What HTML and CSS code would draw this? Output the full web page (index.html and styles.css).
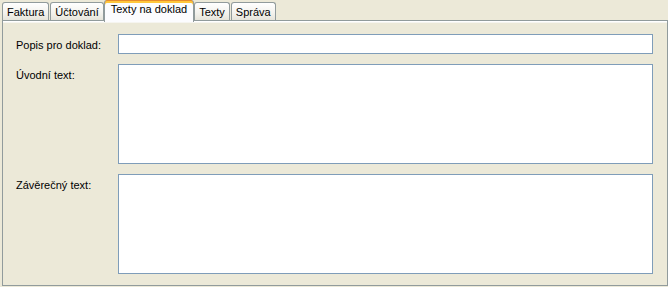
FILE: index.html
```html
<!DOCTYPE html>
<html lang="cs">

<head>
    <meta charset="UTF-8">
    <meta name="viewport" content="width=device-width, initial-scale=1.0">
    <title>Texty na doklad</title>
    <link rel="stylesheet" href="styles.css">
</head>

<body>
    <!-- Tab bar -->
    <div class="tabs">
        <div class="tab">Faktura</div>
        <div class="tab">Účtování</div>
        <div class="tab active">Texty na doklad</div>
        <div class="tab">Texty</div>
        <div class="tab">Správa</div>
    </div>

    <!-- Tab panel -->
    <div class="panel">
        <div class="form">
            <label class="label" for="popis">Popis pro doklad:</label>
            <input class="field" id="popis" type="text">

            <label class="label" for="uvod">Úvodní text:</label>
            <textarea class="field area" id="uvod"></textarea>

            <label class="label" for="zaver">Závěrečný text:</label>
            <textarea class="field area" id="zaver"></textarea>
        </div>
    </div>
</body>

</html>
```

FILE: styles.css
```css
/* Reset styling */
* {
    margin: 0;
    padding: 0;
    box-sizing: border-box;
    font-family: "Liberation Sans", Arial, sans-serif;
}

body {
    background-color: #ece9d8;
    font-size: 11px;
    color: #000;
    width: 668px;
    height: 287px;
    overflow: hidden;
}

/* Tab bar */
.tabs {
    display: flex;
    align-items: flex-end;
    height: 20px;
    padding-left: 2px;
    position: relative;
    z-index: 1;
}

.tab {
    height: 18px;
    margin-right: 1px;
    padding: 3px 4px 0 4px;
    line-height: 13px;
    border: 1px solid #919b9c;
    border-bottom: none;
    border-radius: 3px 3px 0 0;
    background: linear-gradient(#ffffff, #f3f2ed 60%, #e6e4da);
    white-space: nowrap;
}

.tab.active {
    height: 22px;
    margin: 0 0 -2px -1px;
    padding: 3px 6px 0 6px;
    border-top: none;
    background: #fcfcfe;
    box-shadow: inset 0 1px 0 #e68b2c, inset 0 3px 0 #ffc73c;
}

/* Tab panel */
.panel {
    height: 266px;
    margin-left: 2px;
    border: 1px solid #919b9c;
    background-color: #ece9d8;
    box-shadow: inset 0 1px 0 #fff, inset 0 2px 0 #f6f5f0;
    padding: 13px 14px 11px 13px;
}

.form {
    display: grid;
    grid-template-columns: 102px 1fr;
    row-gap: 10px;
}

.label {
    padding-top: 5px;
    line-height: 13px;
}

.field {
    display: block;
    width: 100%;
    height: 20px;
    border: 1px solid #7f9db9;
    background-color: #fff;
    font-size: 11px;
    outline: none;
}

.area {
    height: 100px;
    resize: none;
}
```
